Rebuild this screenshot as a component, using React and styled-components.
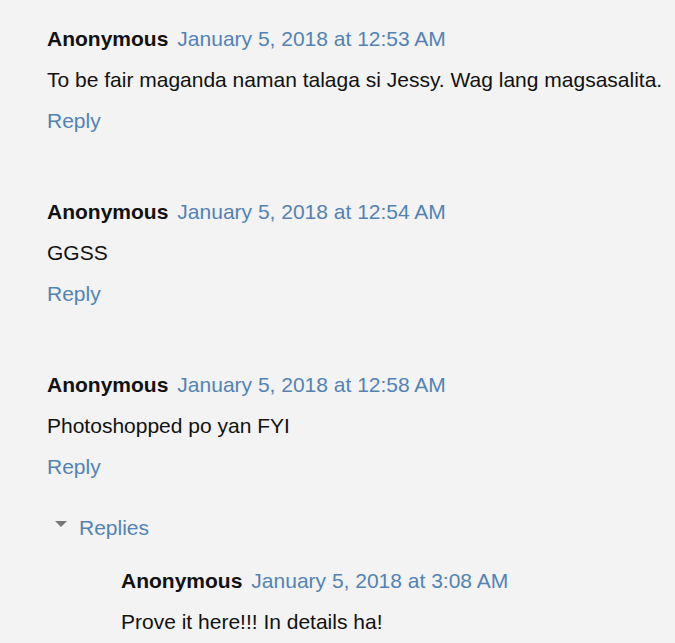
import React from "react";
import styled, { createGlobalStyle } from "styled-components";

const Global = createGlobalStyle`
  html, body {
    margin: 0;
    padding: 0;
    background: #f3f3f3;
  }
  body {
    font-family: "Liberation Sans", Arial, sans-serif;
    color: #111;
  }
`;

const Page = styled.div`
  padding: 18px 0 0 47px;
  font-size: 21px;
  line-height: 41px;
`;

const Comment = styled.div`
  margin-bottom: ${(props) => (props.last ? "0" : "50px")};
`;

const Header = styled.div`
  display: flex;
  align-items: baseline;
  gap: 9px;
  white-space: nowrap;
`;

const Author = styled.span`
  font-weight: bold;
  color: #111;
`;

const Stamp = styled.a`
  color: #5283b4;
  text-decoration: none;
`;

const Body = styled.div`
  white-space: nowrap;
`;

const ReplyLink = styled.a`
  display: block;
  color: #5283b4;
  text-decoration: none;
`;

const RepliesToggle = styled.div`
  display: flex;
  align-items: center;
  gap: 12px;
  margin: 20px 0 0 8px;
  color: #5283b4;
`;

const Caret = styled.span`
  width: 0;
  height: 0;
  border-left: 6px solid transparent;
  border-right: 6px solid transparent;
  border-top: 6px solid #777;
  margin-top: -8px;
`;

const Thread = styled.div`
  padding-left: 74px;
  margin-top: 12px;
`;

const comments = [
  {
    date: "January 5, 2018 at 12:53 AM",
    text: "To be fair maganda naman talaga si Jessy. Wag lang magsasalita.",
  },
  { date: "January 5, 2018 at 12:54 AM", text: "GGSS" },
  { date: "January 5, 2018 at 12:58 AM", text: "Photoshopped po yan FYI" },
];

const CommentItem = ({ date, text, last, noReply }) => (
  <Comment last={last}>
    <Header>
      <Author>Anonymous</Author>
      <Stamp href="#">{date}</Stamp>
    </Header>
    <Body>{text}</Body>
    {!noReply && <ReplyLink href="#">Reply</ReplyLink>}
  </Comment>
);

export default function App() {
  return (
    <>
      <Global />
      <Page>
        {comments.map((c, i) => (
          <CommentItem key={i} {...c} last={i === comments.length - 1} />
        ))}
        <RepliesToggle>
          <Caret />
          <span>Replies</span>
        </RepliesToggle>
        <Thread>
          <CommentItem
            date="January 5, 2018 at 3:08 AM"
            text="Prove it here!!! In details ha!"
            last
            noReply
          />
        </Thread>
      </Page>
    </>
  );
}
